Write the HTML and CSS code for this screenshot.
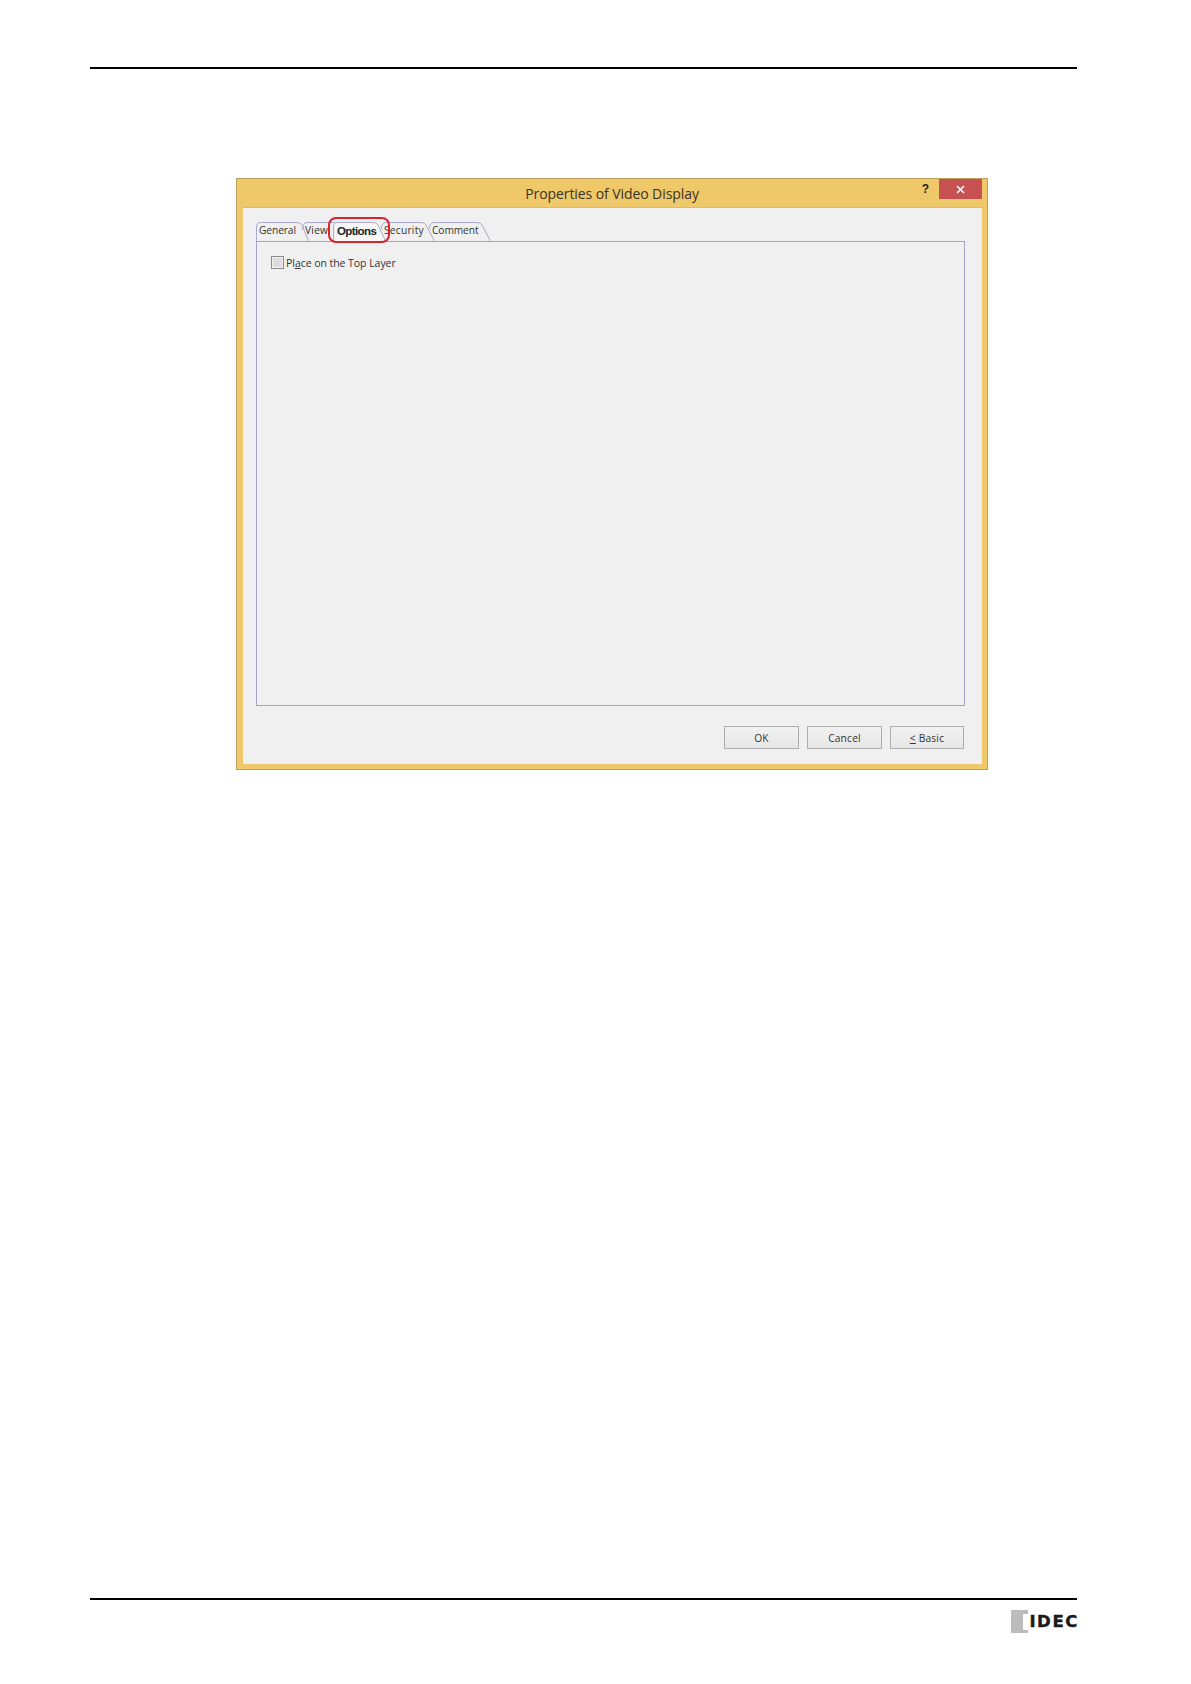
FILE: index.html
```html
<!DOCTYPE html>
<html lang="en">
<head>
<meta charset="utf-8">
<title>Properties of Video Display</title>
<link rel="stylesheet" href="styles.css">
</head>
<body>
<div class="page">
  <div class="rule rule-top"></div>
  <section class="dialog">
    <header class="titlebar">
      <span class="title-spacer"></span>
      <span class="title">Properties of Video Display</span>
      <div class="title-actions">
        <span class="help">?</span>
        <span class="close">
          <svg width="9" height="9" viewBox="0 0 9 9"><path d="M1 1L8 8M8 1L1 8" stroke="#fff" stroke-width="1.6" fill="none"/></svg>
        </span>
      </div>
    </header>
    <div class="client">
      <div class="tabs">
        <div class="tab tab-general">
          <svg class="tab-shape" width="56" height="20" viewBox="0 0 56 20"><path d="M0.5 20V5Q0.5 0.5 5 0.5H41Q44.500 0.500 46 3L53 20" /></svg>
          <span class="tab-label">General</span>
        </div>
        <div class="tab tab-view">
          <svg class="tab-shape" width="34" height="20" viewBox="0 0 34 20"><path d="M0.5 8Q0.5 0.5 5 0.500H33" /></svg>
          <span class="tab-label">View</span>
        </div>
        <div class="tab tab-options">
          <svg class="tab-shape" width="54" height="20" viewBox="0 0 54 20"><path class="active-shape" d="M0.5 20V5Q0.5 0.5 5 0.5H40Q43.500 0.500 45 3L53 20" /></svg>
          <span class="tab-label">Options</span>
        </div>
        <div class="tab tab-security">
          <svg class="tab-shape" width="56" height="20" viewBox="0 0 56 20"><path d="M0.5 7Q0.5 0.5 5 0.5H40Q43.500 0.500 45 3L54 20" /></svg>
          <span class="tab-label">Security</span>
        </div>
        <div class="tab tab-comment">
          <svg class="tab-shape" width="63" height="20" viewBox="0 0 63 20"><path d="M0.5 7Q0.5 0.5 5 0.5H48Q51.500 0.500 53 3L62 20" /></svg>
          <span class="tab-label">Comment</span>
        </div>
        <div class="highlight"></div>
      </div>
      <div class="panel">
        <label class="check-row">
          <span class="checkbox"></span>
          <span class="check-label">Pl<u>a</u>ce on the Top Layer</span>
        </label>
      </div>
      <div class="buttons">
        <button class="btn">OK</button>
        <button class="btn">Cancel</button>
        <button class="btn btn-basic"><u>&lt;</u> Basic</button>
      </div>
    </div>
  </section>
  <footer class="footer">
    <div class="rule"></div>
    <div class="logo">
      <svg width="17" height="23" viewBox="0 0 17 23"><path d="M0 0H17V4H12V20H17V23H0Z" fill="#bcbcbc"/></svg>
      <span class="logo-text">IDEC</span>
    </div>
  </footer>
</div>
</body>
</html>
```
FILE: styles.css
```css
* { box-sizing: border-box; }
html, body { margin: 0; padding: 0; background: #fff; }
.page {
  width: 1191px;
  height: 1684px;
  padding: 67px 114px 51px 90px;
  display: flex;
  flex-direction: column;
  font-family: "Open Sans", "Noto Sans", sans-serif;
  color: #2a2a2a;
}
.rule { height: 2px; background: #000; }
.dialog {
  width: 752px;
  height: 592px;
  margin: 109px 0 0 146px;
  background: #efc869;
  border: 1px solid #bb9f5b;
  display: flex;
  flex-direction: column;
}
.titlebar {
  height: 28px;
  flex: none;
  display: grid;
  grid-template-columns: 1fr auto 1fr;
  padding: 0 5px;
}
.title {
  font-size: 14px;
  line-height: 29px;
  color: #3a3524;
  letter-spacing: -0.08px;
}
.title-actions { display: flex; justify-content: flex-end; align-items: flex-start; }
.help {
  font: bold 12px/21px "Liberation Sans", sans-serif;
  color: #222;
  margin-right: 10px;
}
.close {
  width: 43px;
  height: 20px;
  background: #c75050;
  display: flex;
  align-items: center;
  justify-content: center;
}
.client {
  flex: 1;
  margin: 0 5px 5px 6px;
  background: #f0f0f0;
  border: 1px solid #d9bb6e;
  border-width: 1px 0 0 0;
  padding: 14px 17px 0 13px;
}
.tabs {
  position: relative;
  display: flex;
  height: 20px;
  z-index: 1;
}
.tab { position: relative; height: 20px; flex: none; }
.tab-general { width: 46px; }
.tab-view { width: 31px; }
.tab-options { width: 48px; z-index: 2; }
.tab-security { width: 48px; }
.tab-comment { width: 60px; }
.tab-shape { position: absolute; left: 0; top: 0; overflow: visible; }
.tab-shape path { fill: none; stroke: #aaaacb; stroke-width: 1; }
.tab-shape .active-shape { fill: #f7f7f7; }
.tab-label {
  position: relative;
  display: block;
  padding-left: 3px;
  font-size: 10.200px;
  line-height: 17px;
  letter-spacing: -0.08px;
  color: #333;
  white-space: nowrap;
}
.tab-view .tab-label,
.tab-security .tab-label { letter-spacing: 0.25px; }
.tab-options .tab-label {
  padding-left: 4px;
  font: bold 11.500px/18px "Liberation Sans", sans-serif;
  letter-spacing: -0.6px;
  color: #222;
}
.highlight {
  position: absolute;
  left: 72px;
  top: -5px;
  width: 62px;
  height: 26px;
  border: 2px solid #d8232f;
  border-radius: 8px;
  z-index: 3;
}
.panel {
  height: 465px;
  border: 1px solid #a3a3c9;
  padding: 14px 0 0 14px;
  background: #f0f0f0;
  margin-top: -1px;
}
.check-row { display: flex; align-items: center; gap: 2px; height: 13px; }
.checkbox {
  width: 13px;
  height: 13px;
  border: 1px solid #8a8a8a;
  background: #dcdcdc;
  box-shadow: inset 0 0 0 1px #f2f2f2;
}
.check-label {
  font-size: 10.500px;
  letter-spacing: -0.05px;
  color: #333;
  white-space: nowrap;
}
.buttons {
  display: flex;
  justify-content: flex-end;
  gap: 8px;
  margin-top: 20px;
  padding-right: 1px;
}
.btn {
  width: 75px;
  height: 23px;
  padding: 0;
  border: 1px solid #adadad;
  background: linear-gradient(#f2f2f2, #e6e6e6);
  font-family: inherit;
  font-size: 10.200px;
  letter-spacing: 0.2px;
  color: #333;
}
.btn-basic { width: 74px; }
.footer { margin-top: auto; }
.logo {
  display: flex;
  justify-content: flex-end;
  align-items: center;
  margin-top: 10px;
  height: 23px;
}
.logo-text {
  font: bold 16.500px/23px "DejaVu Sans", sans-serif;
  letter-spacing: 1.6px;
  color: #1a1a1a;
  -webkit-text-stroke: 0.4px #1a1a1a;
  margin-left: 1px;
  margin-right: -2px;
}
```
